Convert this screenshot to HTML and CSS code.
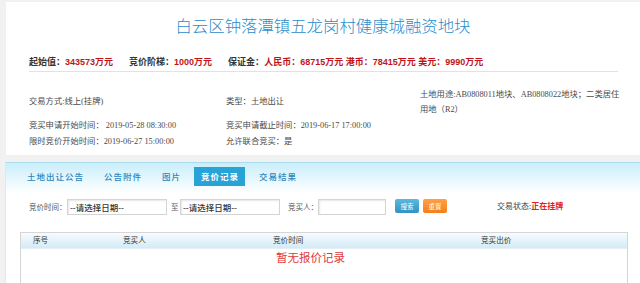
FILE: index.html
```html
<!DOCTYPE html>
<html lang="zh-CN">
<head>
  <meta charset="UTF-8">
  <title>白云区钟落潭镇五龙岗村健康城融资地块</title>
  <link rel="stylesheet" href="styles.css">
</head>
<body>

<!-- 地块基本信息 -->
<div class="top">
  <h1 class="title">白云区钟落潭镇五龙岗村健康城融资地块</h1>

  <div class="stats">
    <div class="stat"><span class="label">起始值：</span><span class="val">343573万元</span></div>
    <div class="stat"><span class="label">竞价阶梯：</span><span class="val">1000万元</span></div>
    <div class="stat"><span class="label">保证金：</span><span class="val">人民币：68715万元 港币：78415万元 美元：9990万元</span></div>
  </div>

  <div class="info">
    <div class="cell">交易方式:线上(挂牌)</div>
    <div class="cell">类型：土地出让</div>
    <div class="cell use">土地用途:AB0808011地块、AB0808022地块；二类居住<br>用地（R2）</div>
    <div class="cell">竞买申请开始时间： 2019-05-28 08:30:00</div>
    <div class="cell">竞买申请截止时间：2019-06-17 17:00:00</div>
    <div class="cell"></div>
    <div class="cell">限时竞价开始时间：2019-06-27 15:00:00</div>
    <div class="cell">允许联合竞买：是</div>
    <div class="cell"></div>
  </div>
</div>

<!-- 标签页 -->
<div class="panel">
  <div class="tabs">
    <span class="tab">土地出让公告</span>
    <span class="tab">公告附件</span>
    <span class="tab">图片</span>
    <span class="tab active">竞价记录</span>
    <span class="tab">交易结果</span>
  </div>

  <div class="filter">
    <span class="flabel">竞价时间：</span>
    <input class="date" value="--请选择日期--">
    <span class="to">至</span>
    <input class="date" value="--请选择日期--">
    <span class="flabel buyer-label">竞买人：</span>
    <input class="buyer">
    <button class="btn btn-search">搜索</button>
    <button class="btn btn-reset">重置</button>
    <span class="status">交易状态:<b>正在挂牌</b></span>
  </div>

  <div class="records">
    <div class="rec-head">
      <span class="c1">序号</span>
      <span class="c2">竞买人</span>
      <span class="c3">竞价时间</span>
      <span class="c4">竞买出价</span>
    </div>
    <div class="empty">暂无报价记录</div>
  </div>
</div>

</body>
</html>
```

FILE: styles.css
```css
body {
  margin: 0;
  padding: 0;
  background-color: #f1f1f1;
  font-family: 'Liberation Serif', 'Noto Sans CJK SC', serif;
  color: #444444;
  overflow: hidden;
}
.top {
  background-color: #FFFFFF;
  margin: 2px 0 0 6px;
  padding: 13px 0 5px 0;
}
.title {
  margin: 0;
  font-size: 16.4px;
  line-height: 20px;
  font-weight: 300;
  text-align: center;
  color: #2a8cc9;
  font-family: 'Noto Sans CJK SC', sans-serif;
}
.stats {
  display: flex;
  gap: 16px;
  margin: 19px 22px 0 23px;
  padding-bottom: 1px;
  line-height: 16px;
  font-size: 9px;
  font-weight: bold;
  font-family: 'Liberation Sans', 'Noto Sans CJK SC', sans-serif;
  border-bottom: 1px solid #e2e2e2;
}
.stats .label {
  color: #333333;
}
.stats .val {
  color: #c0141a;
}
.info {
  display: grid;
  grid-template-columns: 197px 194px auto;
  grid-template-rows: 32px 16px 16px;
  align-items: center;
  margin-top: 14px;
  padding-left: 23px;
  font-size: 8.3px;
  line-height: 16px;
  color: #4a4a4a;
  white-space: nowrap;
}
.info .use {
  line-height: 15.5px;
}
.panel {
  margin: 7px 0 0 5px;
  height: 125px;
  border-top: 1px solid #a8dbec;
  border-left: 1px solid #d3edf5;
  background: linear-gradient(#c9eefb, #ffffff 30px);
}
.tabs {
  display: flex;
  gap: 7px;
  padding: 4px 0 0 14px;
}
.tab {
  padding: 0 6px 0 7px;
  line-height: 19px;
  font-size: 8.5px;
  letter-spacing: 1px;
  color: #2c86bd;
  font-weight: 500;
  font-family: 'Noto Sans CJK SC', sans-serif;
}
.tab.active {
  background-color: #27a3d8;
  color: #FFFFFF;
  font-weight: bold;
}
.filter {
  display: flex;
  align-items: center;
  height: 17px;
  margin-top: 12px;
  padding-left: 23px;
  font-size: 7.5px;
  color: #555555;
  font-family: 'Noto Sans CJK SC', sans-serif;
}
.flabel {
  width: 38px;
}
.buyer-label {
  width: 30px;
  margin-left: 8px;
}
.to {
  margin: 0 2px 0 4px;
  width: 7px;
}
.date, .buyer {
  box-sizing: border-box;
  height: 16px;
  margin: 0;
  padding: 0 2px;
  border: 1px solid #d4d4d4;
  box-shadow: inset 1px 1px 2px #e6e6e6;
  background-color: #FFFFFF;
  font-size: 8.5px;
  font-weight: 500;
  color: #333333;
  font-family: 'Liberation Sans', 'Noto Sans CJK SC', sans-serif;
  outline: none;
}
.date {
  width: 100px;
}
.buyer {
  width: 68px;
}
.btn {
  box-sizing: border-box;
  width: 24px;
  height: 14px;
  margin-left: 4px;
  margin-bottom: 2px;
  padding: 0;
  border: none;
  border-radius: 2px;
  color: #FFFFFF;
  font-size: 6.5px;
  font-family: 'Noto Sans CJK SC', sans-serif;
}
.btn-search {
  margin-left: 9px;
  background: linear-gradient(#5cb8dc, #3293c2);
}
.btn-reset {
  background: linear-gradient(#ffa04a, #f57f18);
}
.status {
  margin-left: 50px;
  font-size: 8px;
  color: #444444;
  margin-bottom: 2px;
}
.status b {
  color: #e0201c;
}
.records {
  width: 606px;
  height: 50px;
  margin: 17px 0 0 14px;
  border: 1px solid #d6d6d6;
  border-bottom: none;
  background-color: #FFFFFF;
}
.rec-head {
  display: flex;
  height: 15px;
  line-height: 15px;
  font-size: 7.6px;
  color: #333333;
  background: linear-gradient(#f7fbfd, #d3ebf7);
  border-bottom: 1px solid #e4eef3;
}
.rec-head span {
  padding-left: 12px;
}
.c1 { width: 78px; }
.c2 { width: 138px; }
.c3 { width: 196px; }
.c4 { width: 146px; }
.empty {
  padding: 1px 0 0 255px;
  font-size: 11.5px;
  line-height: 14px;
  color: #e03a3a;
  font-family: 'Noto Sans CJK SC', sans-serif;
}
```
